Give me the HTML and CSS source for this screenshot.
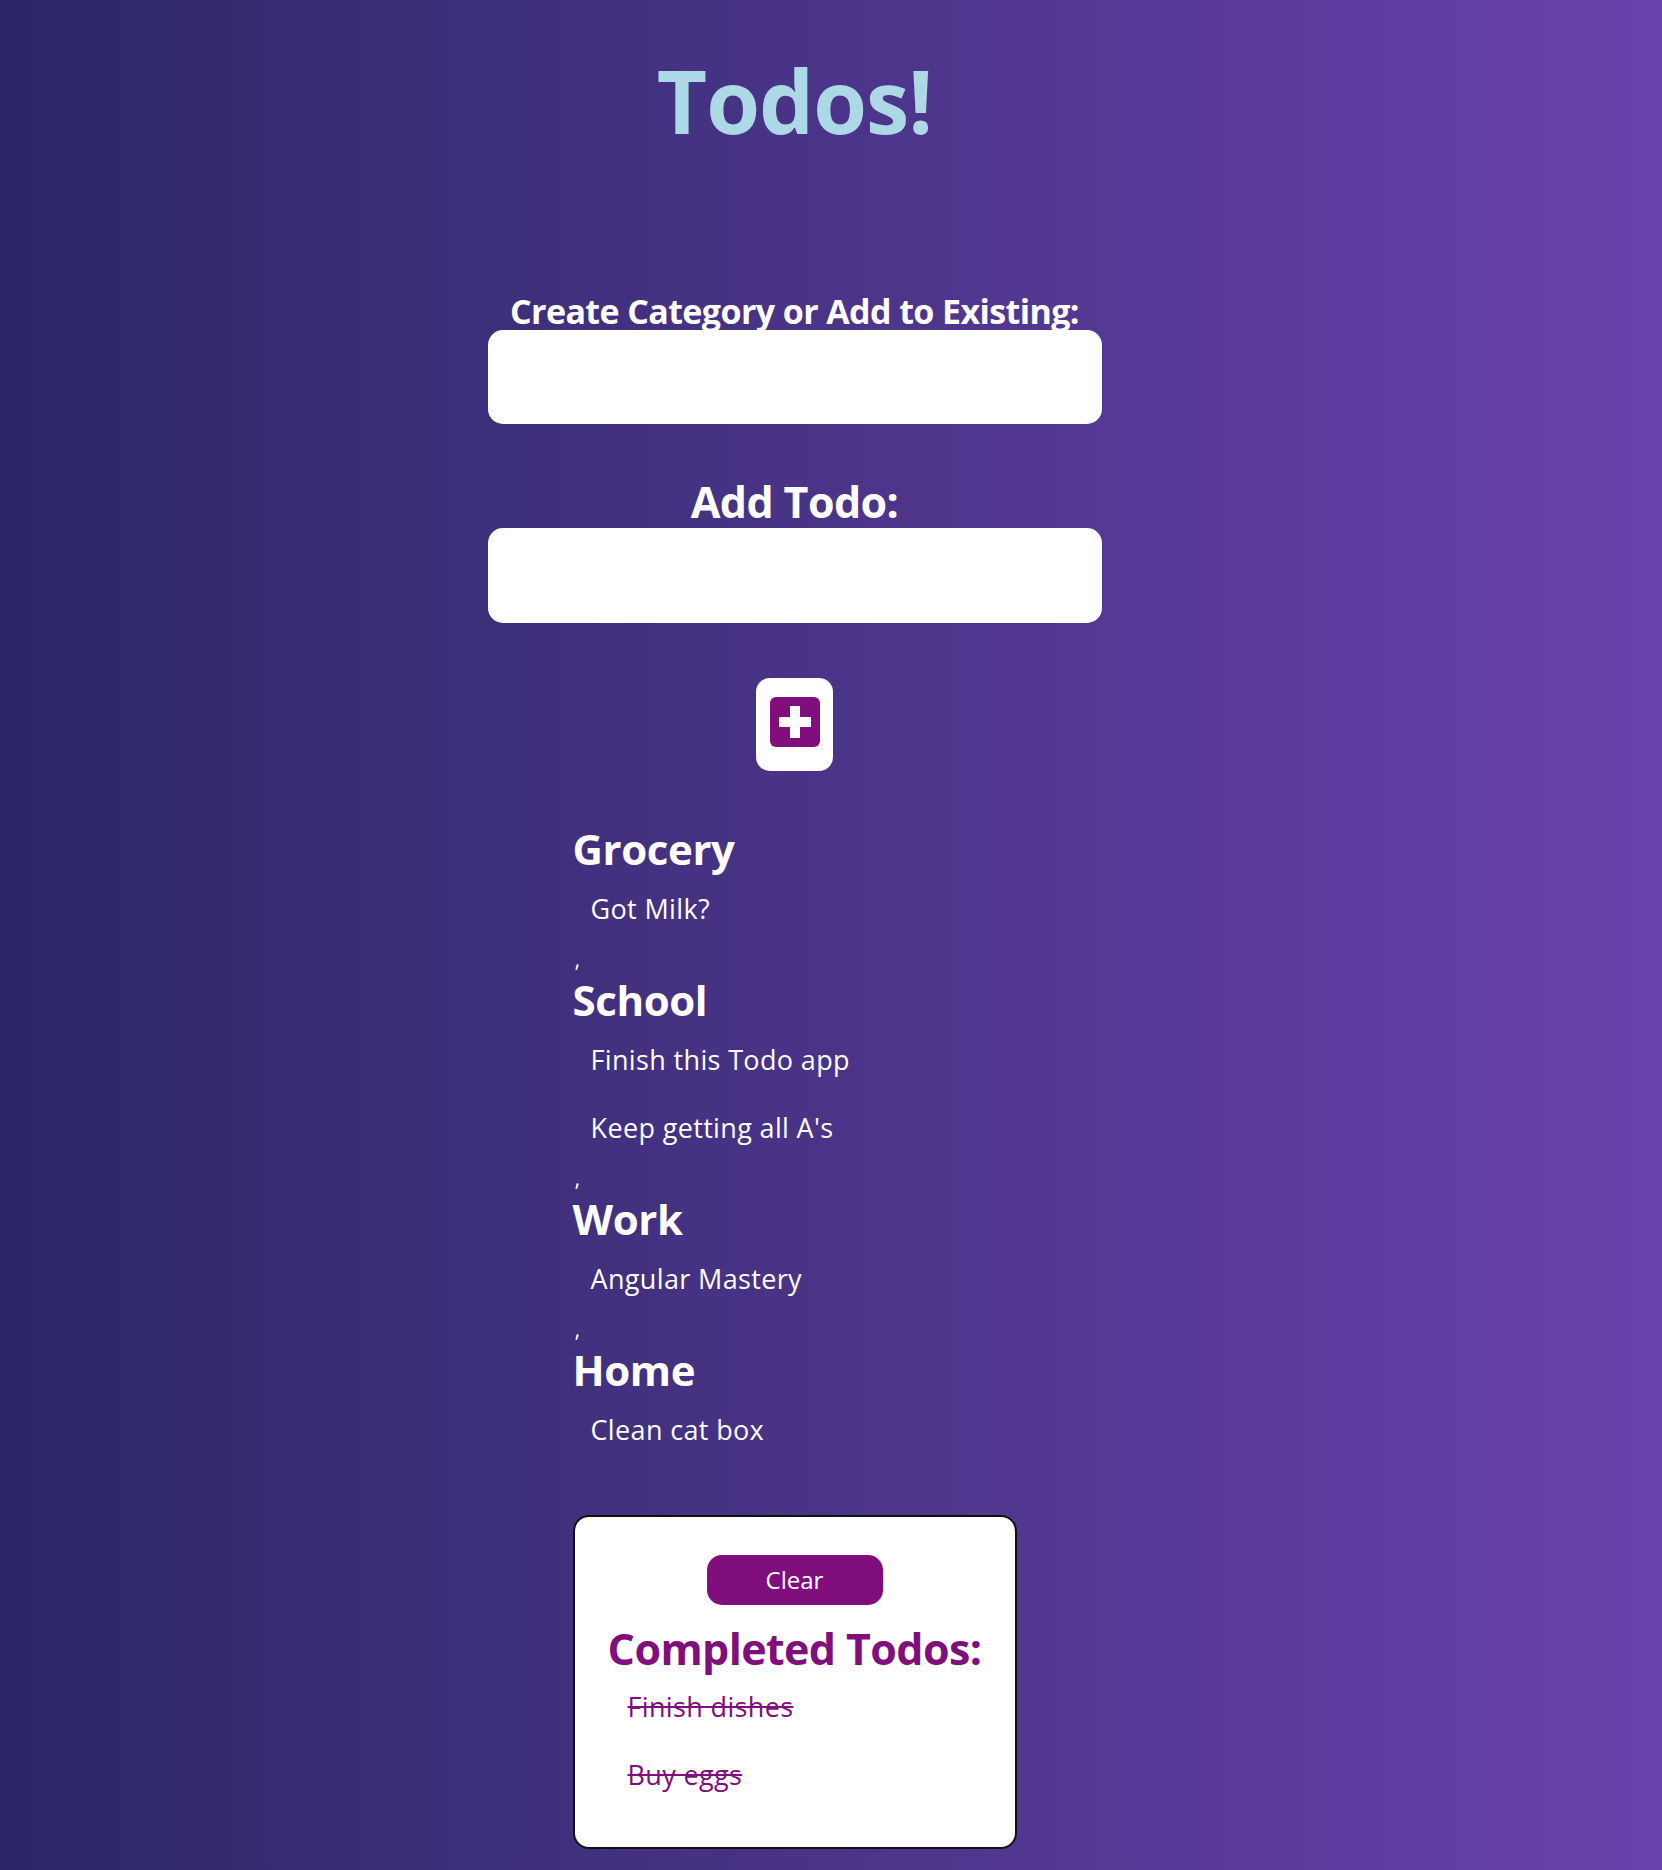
FILE: index.html
```html
<!DOCTYPE html>
<html lang="en">
<head>
<meta charset="utf-8">
<title>Todos!</title>
<link rel="stylesheet" href="styles.css">
</head>
<body>
<div class="page">
  <h1 class="title">Todos!</h1>

  <form class="entry">
    <label class="label label-small" for="cat">Create Category or Add to Existing:</label>
    <input class="field" id="cat" type="text">
    <label class="label label-big" for="todo">Add Todo:</label>
    <input class="field field-todo" id="todo" type="text">
  </form>

  <button class="add-btn" type="button" aria-label="Add">
    <svg class="add-icon" width="50" height="50" viewBox="0 0 50 50">
      <rect x="0" y="0" width="50" height="50" rx="6" fill="#800f7d"/>
      <path d="M20 9h10v11h11v10H30v11H20V30H9V20h11z" fill="#fff"/>
    </svg>
  </button>

  <div class="categories">
    <section class="category">
      <h2 class="cat-title">Grocery</h2>
      <ul class="items">
        <li>Got Milk?</li>
      </ul>
    </section>
    <div class="sep">,</div>
    <section class="category">
      <h2 class="cat-title">School</h2>
      <ul class="items">
        <li>Finish this Todo app</li>
        <li>Keep getting all A's</li>
      </ul>
    </section>
    <div class="sep">,</div>
    <section class="category">
      <h2 class="cat-title">Work</h2>
      <ul class="items">
        <li>Angular Mastery</li>
      </ul>
    </section>
    <div class="sep">,</div>
    <section class="category">
      <h2 class="cat-title">Home</h2>
      <ul class="items">
        <li>Clean cat box</li>
      </ul>
    </section>
  </div>

  <div class="done-box">
    <button class="clear-btn" type="button">Clear</button>
    <h2 class="done-title">Completed Todos:</h2>
    <ul class="items done-items">
      <li>Finish dishes</li>
      <li>Buy eggs</li>
    </ul>
  </div>
</div>
</body>
</html>
```

FILE: styles.css
```css
html, body {
  margin: 0;
  padding: 0;
}

body {
  min-height: 1870px;
  background: linear-gradient(to right, #2b2765 0%, #4a3488 50%, #6a41ad 100%);
  font-family: "Open Sans", "Noto Sans", sans-serif;
  color: #fff;
}

.page {
  display: flex;
  flex-direction: column;
  align-items: center;
  padding-right: 73px;
  padding-bottom: 20px;
}

.title {
  margin: 57px 0 0;
  font-size: 87px;
  line-height: 87px;
  font-weight: 700;
  color: #add8e6;
  letter-spacing: -1px;
}

.entry {
  width: 614px;
  display: flex;
  flex-direction: column;
  align-items: center;
}

.label {
  display: block;
  font-weight: 700;
  text-align: center;
  line-height: 1;
  white-space: nowrap;
}

.label-small {
  margin-top: 150px;
  font-size: 34px;
  letter-spacing: -0.6px;
}

.label-big {
  margin-top: 56px;
  font-size: 43px;
  letter-spacing: -0.6px;
}

.field {
  display: block;
  box-sizing: border-box;
  width: 614px;
  height: 94px;
  margin-top: 2px;
  border: none;
  border-radius: 15px;
  background: #fff;
  outline: none;
}

.field-todo {
  margin-top: 5px;
  height: 95px;
}

.add-btn {
  margin-top: 55px;
  width: 77px;
  height: 93px;
  padding: 0 0 5px;
  border: none;
  border-radius: 14px;
  background: #fff;
  display: flex;
  align-items: center;
  justify-content: center;
}

.add-icon {
  display: block;
}

.categories {
  width: 444px;
  margin-top: 51px;
}

.category {
  display: block;
}

.cat-title {
  margin: 0;
  font-size: 42px;
  line-height: 54px;
  font-weight: 700;
  letter-spacing: -0.4px;
}

.items {
  list-style: none;
  margin: 0;
  padding: 0 0 0 18px;
}

.items li {
  font-size: 27px;
  letter-spacing: 0.35px;
  line-height: 68px;
  height: 68px;
}

.category .items li:first-child {
  margin-top: -1px;
}

.sep {
  height: 30px;
  font-size: 22px;
  line-height: 30px;
  padding-left: 2px;
}

.done-box {
  box-sizing: border-box;
  width: 444px;
  margin-top: 51px;
  padding: 38px 0 38px;
  border: 2px solid #111;
  border-radius: 16px;
  background: #fff;
  display: flex;
  flex-direction: column;
  align-items: center;
  color: #800f7d;
}

.clear-btn {
  width: 176px;
  height: 50px;
  border: none;
  border-radius: 15px;
  background: #800f7d;
  color: #fff;
  font-family: "Open Sans", "Noto Sans", sans-serif;
  font-size: 24px;
  line-height: 50px;
  padding: 0;
}

.done-title {
  margin: 22px 0 0;
  font-size: 43px;
  line-height: 43px;
  font-weight: 700;
  letter-spacing: -0.6px;
}

.done-items {
  align-self: stretch;
  padding-left: 53px;
  margin-top: 3px;
}

.done-items li {
  text-decoration: line-through;
}
```
